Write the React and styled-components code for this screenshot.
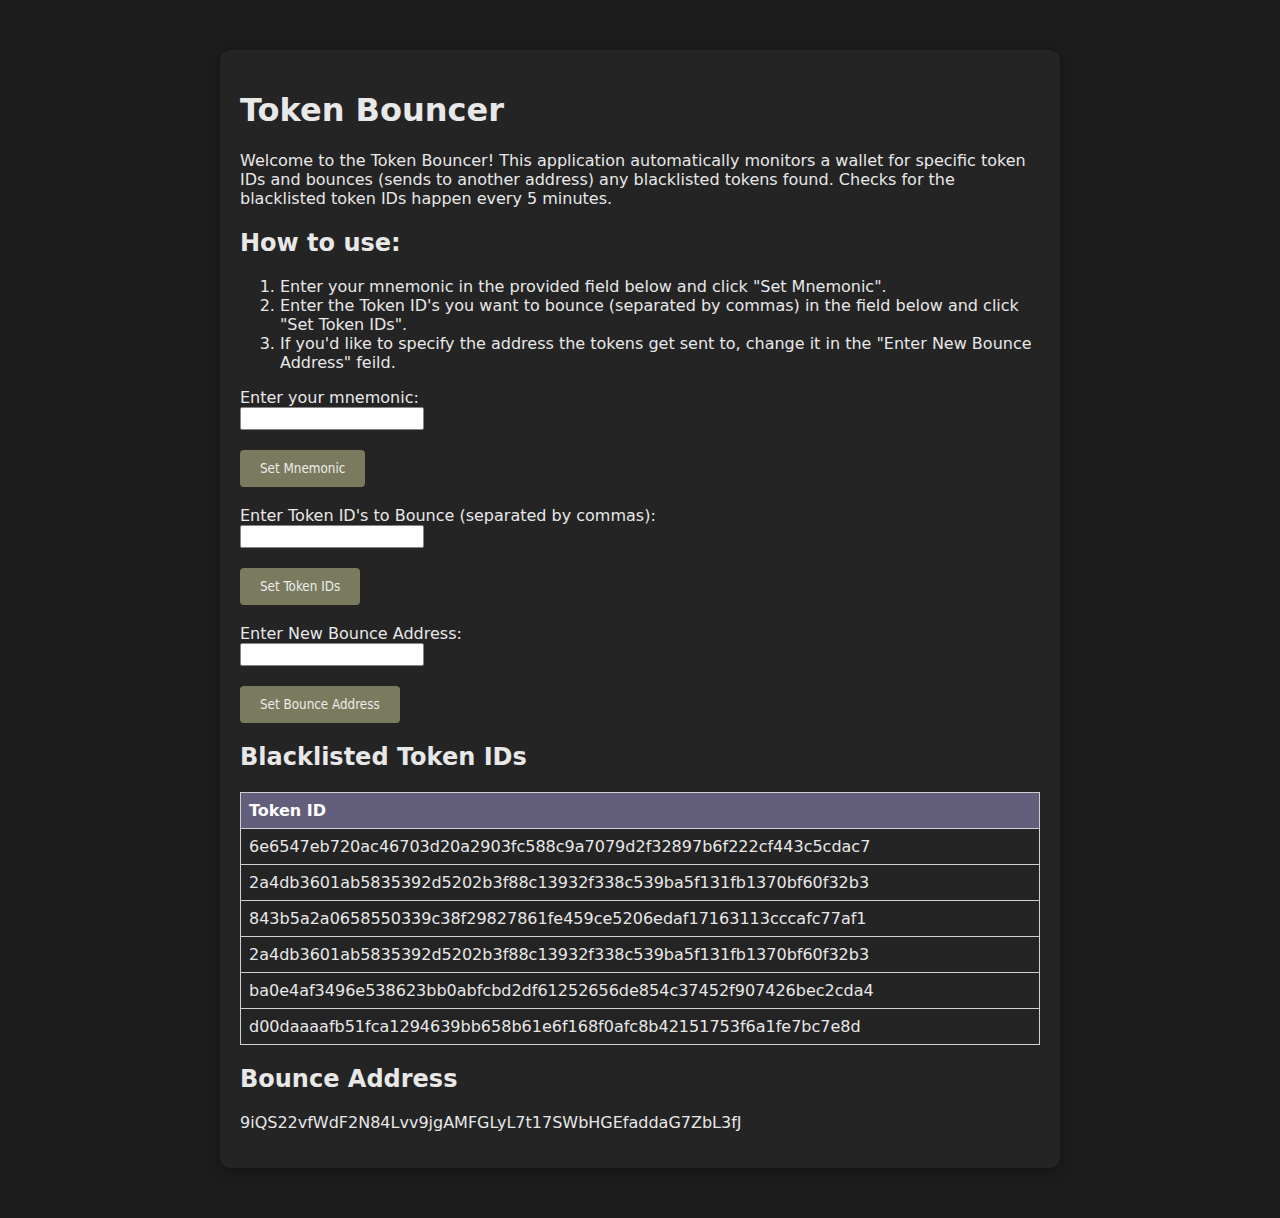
import styled, { createGlobalStyle } from 'styled-components';

const GlobalStyle = createGlobalStyle`
  body {
    margin: 0;
    padding: 50px 0;
    background-color: #1c1c1c;
    color: #e8e8e8;
    font-family: "DejaVu Sans", sans-serif;
  }
`;

const Card = styled.main`
  width: 800px;
  margin: 0 auto;
  padding: 20px;
  background-color: #242424;
  border-radius: 10px;
  box-shadow: 0 4px 12px rgba(0, 0, 0, 0.3);
`;

const Title = styled.h1`
  font-size: 32px;
  margin: 21px 0 22px;
`;

const Heading = styled.h2`
  font-size: 24px;
  margin: ${(p) => (p.$first ? '21px 0 20px' : '20px 0')};
`;

const Text = styled.p`
  font-size: 16px;
  margin: 16px 0;
`;

const Steps = styled.ol`
  margin: 16px 0;
  padding-left: 40px;
`;

const Field = styled.div`
  display: flex;
  flex-direction: column;
  align-items: flex-start;
  margin-bottom: 19px;
`;

const Label = styled.label`
  font-size: 16px;
`;

const Input = styled.input`
  box-sizing: border-box;
  width: 184px;
  height: 23px;
  padding: 1px 2px;
  border: 1px solid #858585;
  border-radius: 2px;
  background: #fff;
`;

const Button = styled.button`
  margin-top: 20px;
  padding: 10px 20px;
  border: none;
  border-radius: 4px;
  background-color: #7a7b5e;
  color: #ececec;
  font-family: "DejaVu Sans Condensed", "DejaVu Sans", sans-serif;
  font-size: 13.33px;
  line-height: 17px;
  cursor: pointer;
`;

const Table = styled.table`
  width: 100%;
  border-collapse: collapse;
  margin-top: 21px;
  font-size: 16px;
`;

const Th = styled.th`
  text-align: left;
  padding: 8px;
  border: 1px solid #cfcfcf;
  background-color: #625e7c;
  color: #fff;
`;

const Td = styled.td`
  padding: 8px;
  border: 1px solid #cfcfcf;
`;

const tokenIds = [
  '6e6547eb720ac46703d20a2903fc588c9a7079d2f32897b6f222cf443c5cdac7',
  '2a4db3601ab5835392d5202b3f88c13932f338c539ba5f131fb1370bf60f32b3',
  '843b5a2a0658550339c38f29827861fe459ce5206edaf17163113cccafc77af1',
  '2a4db3601ab5835392d5202b3f88c13932f338c539ba5f131fb1370bf60f32b3',
  'ba0e4af3496e538623bb0abfcbd2df61252656de854c37452f907426bec2cda4',
  'd00daaaafb51fca1294639bb658b61e6f168f0afc8b42151753f6a1fe7bc7e8d',
];

const fields = [
  { id: 'mnemonic', label: 'Enter your mnemonic:', button: 'Set Mnemonic' },
  { id: 'tokens', label: "Enter Token ID's to Bounce (separated by commas):", button: 'Set Token IDs' },
  { id: 'address', label: 'Enter New Bounce Address:', button: 'Set Bounce Address' },
];

export default function App() {
  return (
    <>
      <GlobalStyle />
      <Card>
        <Title>Token Bouncer</Title>
        <Text>
          Welcome to the Token Bouncer! This application automatically monitors a wallet for specific token
          IDs and bounces (sends to another address) any blacklisted tokens found. Checks for the
          blacklisted token IDs happen every 5 minutes.
        </Text>
        <Heading $first>How to use:</Heading>
        <Steps>
          <li>Enter your mnemonic in the provided field below and click "Set Mnemonic".</li>
          <li>Enter the Token ID's you want to bounce (separated by commas) in the field below and click "Set Token IDs".</li>
          <li>If you'd like to specify the address the tokens get sent to, change it in the "Enter New Bounce Address" feild.</li>
        </Steps>
        {fields.map((f) => (
          <Field key={f.id}>
            <Label htmlFor={f.id}>{f.label}</Label>
            <Input id={f.id} type="text" />
            <Button>{f.button}</Button>
          </Field>
        ))}
        <Heading>Blacklisted Token IDs</Heading>
        <Table>
          <thead>
            <tr>
              <Th>Token ID</Th>
            </tr>
          </thead>
          <tbody>
            {tokenIds.map((id, i) => (
              <tr key={i}>
                <Td>{id}</Td>
              </tr>
            ))}
          </tbody>
        </Table>
        <Heading>Bounce Address</Heading>
        <Text>9iQS22vfWdF2N84Lvv9jgAMFGLyL7t17SWbHGEfaddaG7ZbL3fJ</Text>
      </Card>
    </>
  );
}
